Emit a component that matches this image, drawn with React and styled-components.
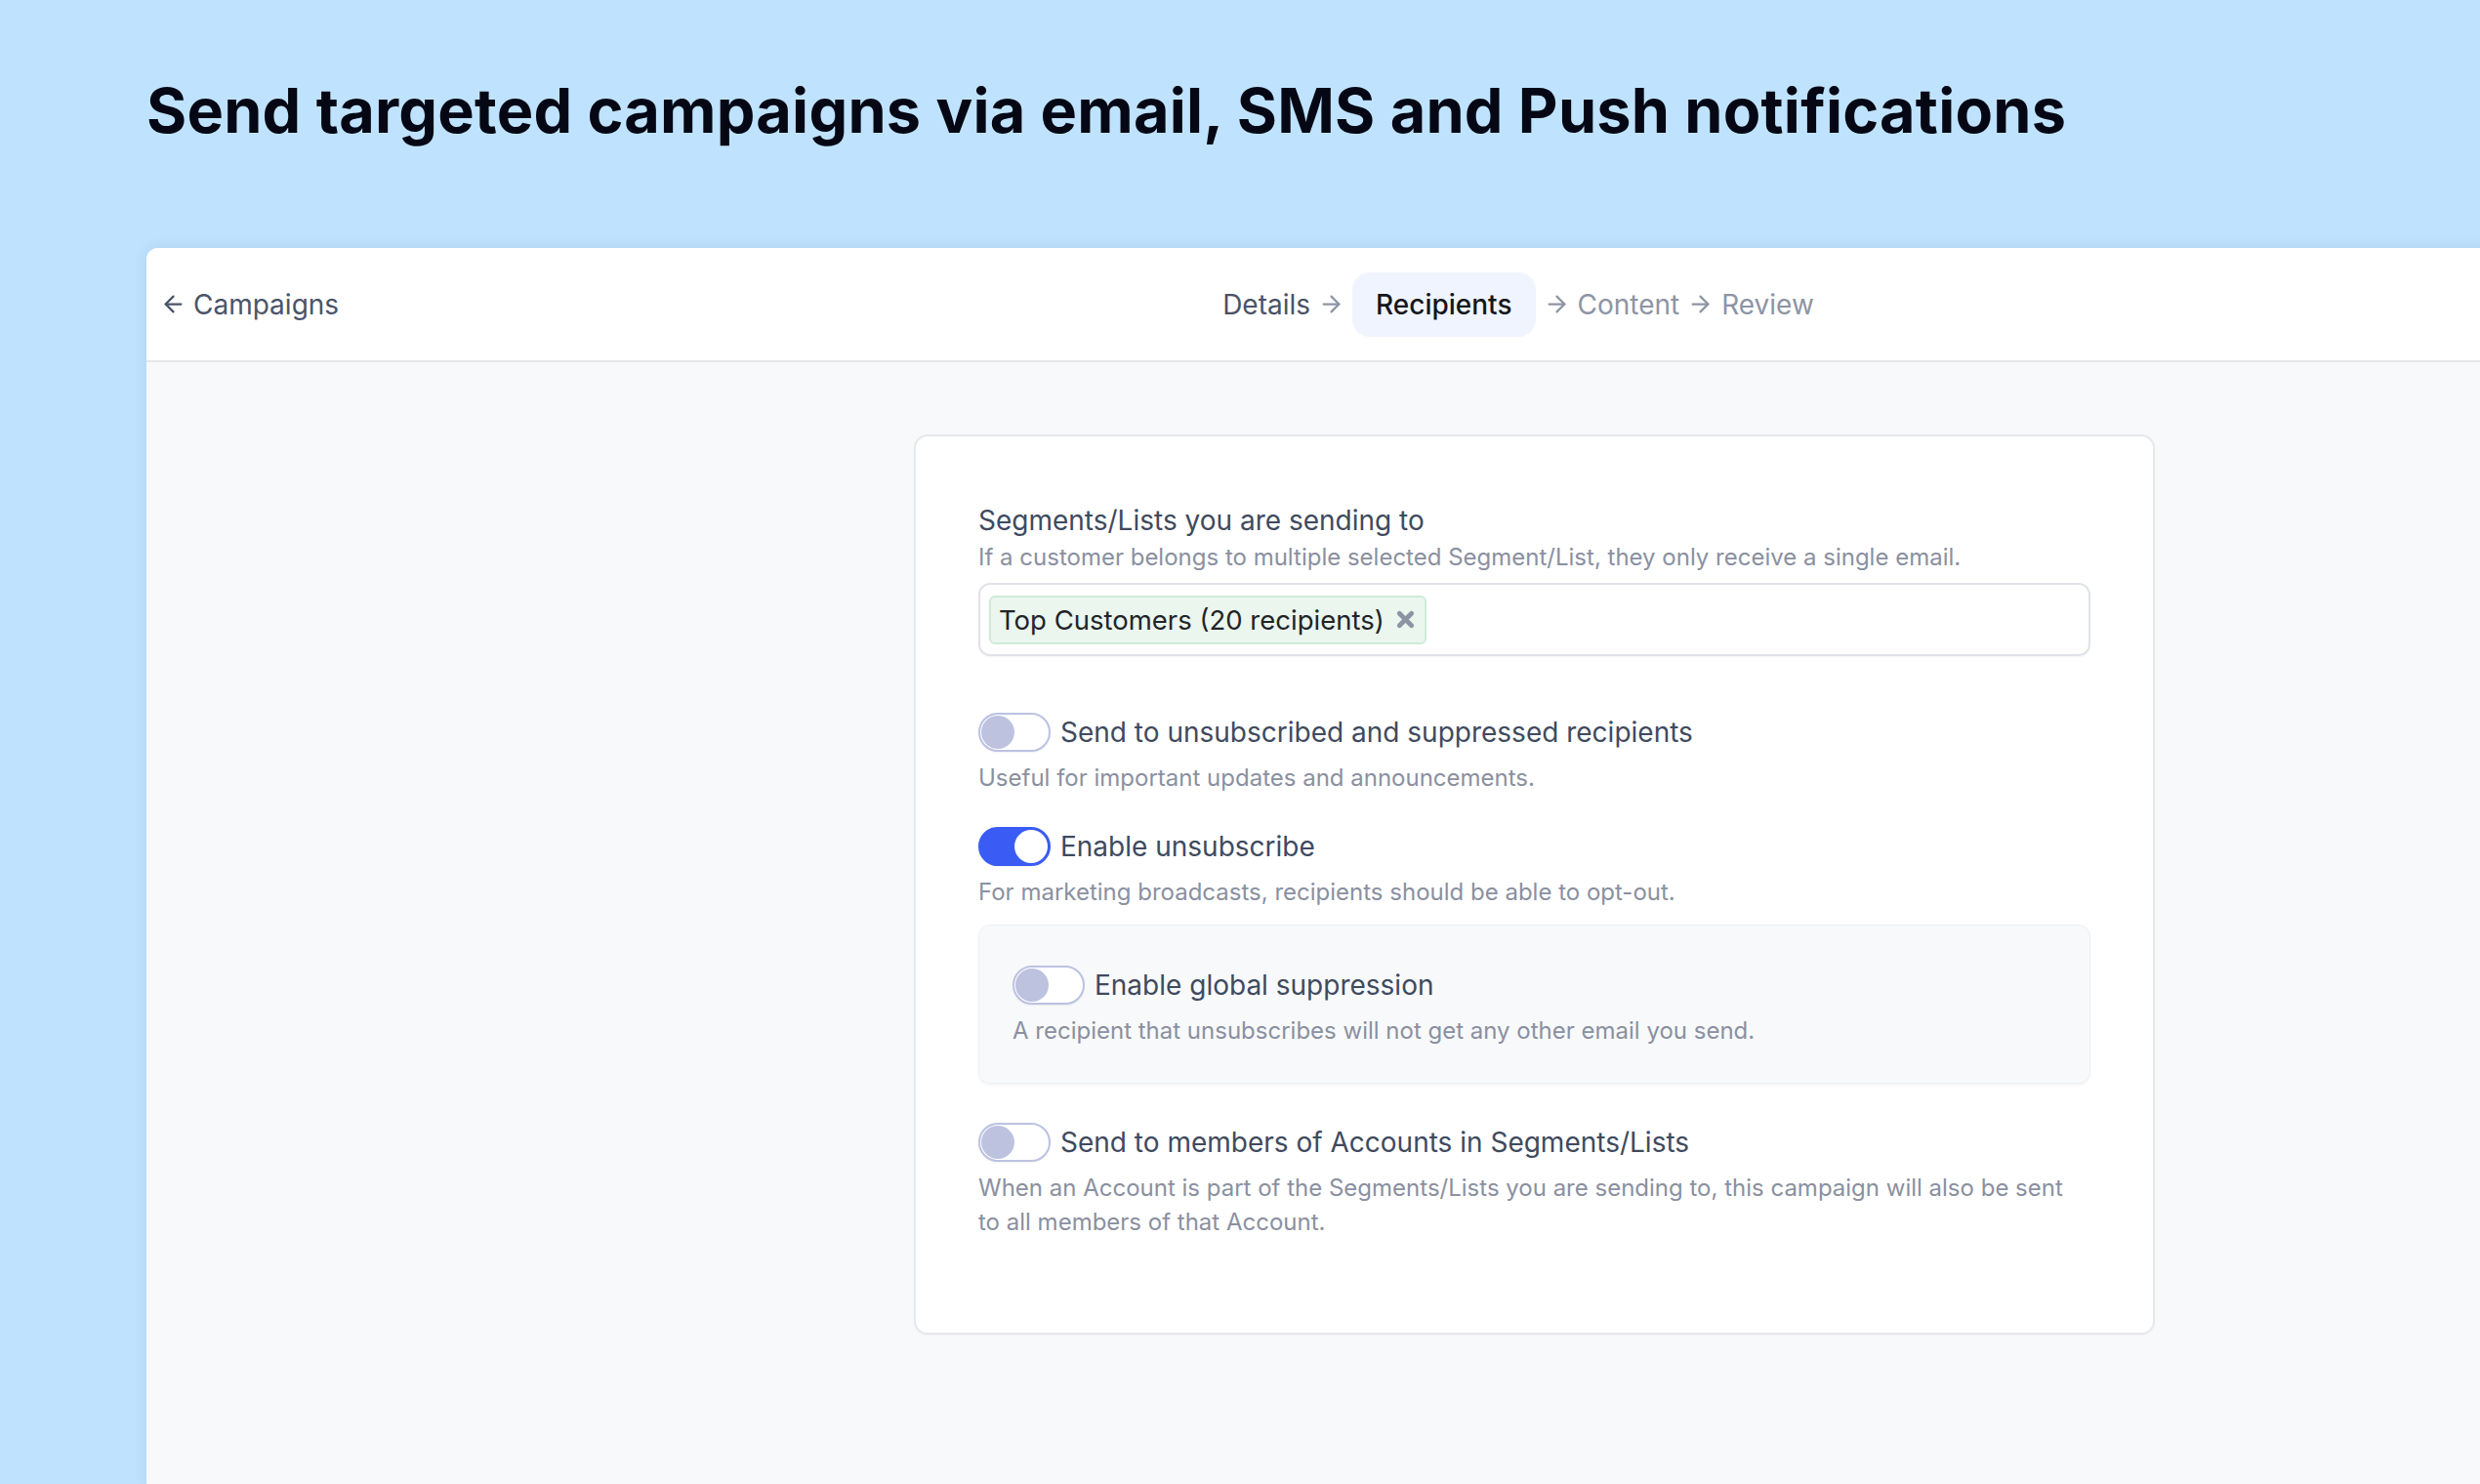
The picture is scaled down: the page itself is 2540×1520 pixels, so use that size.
import React from 'react';
import styled, { createGlobalStyle } from 'styled-components';
import { ArrowLeft, ArrowRight, X } from 'lucide-react';

const GlobalStyle = createGlobalStyle`
  html, body {
    margin: 0;
    padding: 0;
  }
  body {
    background: #bfe3fe;
    font-family: Inter, "Noto Sans", sans-serif;
    overflow: hidden;
    -webkit-font-smoothing: antialiased;
  }
`;

function Toggle({ on }) {
  return (
    <Switch $on={on}>
      <Knob $on={on} />
    </Switch>
  );
}

function Setting({ on, title, desc, $top }) {
  return (
    <SettingBlock $top={$top}>
      <SettingRow>
        <Toggle on={on} />
        <SettingTitle>{title}</SettingTitle>
      </SettingRow>
      <SettingDesc>{desc}</SettingDesc>
    </SettingBlock>
  );
}

export default function App() {
  const steps = [
    { label: 'Details', state: 'done' },
    { label: 'Recipients', state: 'current' },
    { label: 'Content', state: 'todo' },
    { label: 'Review', state: 'todo' },
  ];

  return (
    <>
      <GlobalStyle />
      <Page>
        <Title>Send targeted campaigns via email, SMS and Push notifications</Title>
        <Window>
          <Header>
            <BackLink href="#">
              <ArrowLeft size={27} strokeWidth={2} />
              <span>Campaigns</span>
            </BackLink>
            <Steps>
              {steps.map((s, i) => (
                <React.Fragment key={s.label}>
                  {i > 0 && (
                    <StepArrow>
                      <ArrowRight size={27} strokeWidth={2} />
                    </StepArrow>
                  )}
                  <Step $state={s.state}>{s.label}</Step>
                </React.Fragment>
              ))}
            </Steps>
            <div />
          </Header>
          <Body>
            <Card>
              <FieldLabel>Segments/Lists you are sending to</FieldLabel>
              <FieldHint>
                If a customer belongs to multiple selected Segment/List, they only receive a single email.
              </FieldHint>
              <TagInput>
                <Tag>
                  Top Customers (20 recipients)
                  <TagClose>
                    <X size={25} strokeWidth={4.5} />
                  </TagClose>
                </Tag>
              </TagInput>

              <Setting
                $top={58}
                title="Send to unsubscribed and suppressed recipients"
                desc="Useful for important updates and announcements."
              />
              <Setting
                $top={33}
                on
                title="Enable unsubscribe"
                desc="For marketing broadcasts, recipients should be able to opt-out."
              />
              <SubPanel>
                <Setting
                  $top={0}
                  title="Enable global suppression"
                  desc="A recipient that unsubscribes will not get any other email you send."
                />
              </SubPanel>
              <Setting
                $top={40}
                title="Send to members of Accounts in Segments/Lists"
                desc="When an Account is part of the Segments/Lists you are sending to, this campaign will also be sent to all members of that Account."
              />
            </Card>
          </Body>
        </Window>
      </Page>
    </>
  );
}

const Page = styled.div`
  height: 1520px;
  padding-left: 150px;
  overflow: hidden;
  box-sizing: border-box;
`;

const Title = styled.h1`
  margin: 0;
  padding-top: 75px;
  margin-bottom: 103px;
  font-family: Inter, sans-serif;
  font-size: 63px;
  line-height: 76px;
  font-weight: 700;
  letter-spacing: 0.2px;
  color: #050814;
  white-space: nowrap;
`;

const Window = styled.div`
  width: 2810px;
  height: 1266px;
  background: #f8f9fb;
  border-top-left-radius: 12px;
  box-shadow: 0 0 14px rgba(40, 80, 120, 0.12);
  overflow: hidden;
`;

const Header = styled.div`
  height: 115px;
  display: grid;
  grid-template-columns: 1fr auto 1fr;
  align-items: center;
  padding: 0 14px;
  background: #ffffff;
  border-bottom: 2px solid #e5e7eb;
`;

const BackLink = styled.a`
  display: flex;
  align-items: center;
  gap: 7px;
  color: #4a5468;
  font-size: 28px;
  text-decoration: none;
  justify-self: start;
`;

const Steps = styled.div`
  display: flex;
  align-items: center;
  gap: 8px;
  font-size: 28px;
`;

const StepArrow = styled.span`
  display: flex;
  color: #8e94a3;
`;

const Step = styled.span`
  color: ${p => (p.$state === 'done' ? '#4a5264' : p.$state === 'current' ? '#15171c' : '#8e94a3')};
  font-weight: ${p => (p.$state === 'current' ? 500 : 400)};
  ${p =>
    p.$state === 'current' &&
    `
    background: #f0f4fe;
    border-radius: 18px;
    height: 66px;
    padding: 0 24px;
    display: flex;
    align-items: center;
  `}
`;

const Body = styled.div`
  padding: 74px 0 0 33px;
  display: flex;
  justify-content: center;
`;

const Card = styled.div`
  width: 1271px;
  box-sizing: border-box;
  background: #ffffff;
  border: 2px solid #e6e8ec;
  border-radius: 14px;
  padding: 66px 64px 96px;
  box-shadow: 0 1px 3px rgba(0, 0, 0, 0.03);
`;

const FieldLabel = styled.div`
  font-size: 28px;
  line-height: 40px;
  color: #3f4a5e;
`;

const FieldHint = styled.div`
  font-size: 24px;
  line-height: 36px;
  color: #8a90a0;
`;

const TagInput = styled.div`
  margin-top: 8px;
  height: 75px;
  box-sizing: border-box;
  border: 2px solid #e1e3ea;
  border-radius: 12px;
  padding: 0 9px;
  display: flex;
  align-items: center;
  box-shadow: 0 1px 2px rgba(0, 0, 0, 0.05);
`;

const Tag = styled.span`
  display: flex;
  align-items: center;
  gap: 9px;
  height: 50px;
  box-sizing: border-box;
  padding: 0 7px 0 8px;
  background: #eaf6ee;
  border: 2px solid #cfebd8;
  border-radius: 6px;
  font-size: 27.5px;
  color: #222428;
`;

const TagClose = styled.span`
  display: flex;
  color: #8c93a3;
`;

const SettingBlock = styled.div`
  margin-top: ${p => p.$top}px;
`;

const SettingRow = styled.div`
  display: flex;
  align-items: center;
  gap: 10px;
`;

const SettingTitle = styled.span`
  font-size: 28px;
  line-height: 40px;
  color: #3f4a5e;
`;

const SettingDesc = styled.div`
  margin-top: 9px;
  font-size: 24px;
  line-height: 35px;
  color: #8a90a0;
`;

const Switch = styled.span`
  position: relative;
  flex: none;
  width: 74px;
  height: 40px;
  box-sizing: border-box;
  border-radius: 20px;
  border: 2px solid ${p => (p.$on ? '#3a5cf5' : '#bcc2e2')};
  background: ${p => (p.$on ? '#3a5cf5' : '#ffffff')};
  box-shadow: 0 1px 2px rgba(0, 0, 0, 0.06);
`;

const Knob = styled.span`
  position: absolute;
  top: 1px;
  left: ${p => (p.$on ? '35px' : '1px')};
  width: 34px;
  height: 34px;
  border-radius: 50%;
  background: ${p => (p.$on ? '#ffffff' : '#bdc2df')};
`;

const SubPanel = styled.div`
  margin-top: 16px;
  padding: 41px 34px 36px;
  background: #f8f9fb;
  border: 1px solid #eef0f3;
  border-radius: 12px;
  box-shadow: 0 2px 3px rgba(0, 0, 0, 0.04);
`;
